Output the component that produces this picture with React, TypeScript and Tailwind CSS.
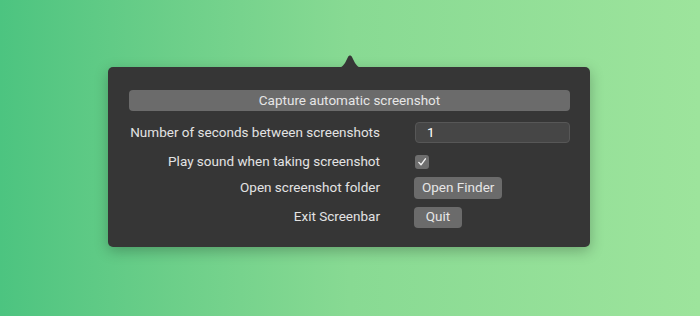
import React from "react";

function Row({ label, children }: { label: string; children: React.ReactNode }) {
  return (
    <div className="flex items-center">
      <div className="w-[251px] flex justify-end whitespace-nowrap text-[13.5px] text-[#e3e3e3] leading-none">
        {label}
      </div>
      <div className="ml-[35px] flex items-center">{children}</div>
    </div>
  );
}

export default function App() {
  return (
    <div
      className="w-[700px] h-[316px] overflow-hidden bg-gradient-to-r from-[#4cc480] via-[#88da93] to-[#9de49c] pt-[55px] pl-[108px]"
      style={{ fontFamily: "Roboto, 'Noto Sans', sans-serif" }}
    >
      <div className="relative w-[482px] mt-[12px]">
        <svg
          className="absolute left-[228px] -top-[12px]"
          width="28"
          height="13"
          viewBox="0 0 28 13"
        >
          <path d="M0 13 C5 13 7 11 9 8 L12 2 C13 0 15 0 16 2 L19 8 C21 11 23 13 28 13 Z" fill="#363636" />
        </svg>
        <div className="rounded-[5px] bg-[#363636] shadow-[0_4px_14px_rgba(0,0,0,0.25)] px-[21px] pt-[21px] pb-[19px]">
          <button className="w-[441px] h-[21px] rounded-[4px] bg-[#6b6b6b] text-[13.5px] text-[#e6e6e6] leading-none">
            Capture automatic screenshot
          </button>
          <div className="mt-[10px] flex flex-col">
            <div className="h-[21px] flex">
              <Row label="Number of seconds between screenshots">
                <div className="w-[155px] h-[21px] rounded-[4px] bg-[#464646] border border-[#575757] flex items-center pl-[11px] text-[13.5px] text-white">
                  1
                </div>
              </Row>
            </div>
            <div className="mt-[8px] h-[21px] flex">
              <Row label="Play sound when taking screenshot">
                <div className="w-[14px] h-[14px] rounded-[3px] bg-[#6e6e6e] flex items-center justify-center">
                  <svg width="10" height="10" viewBox="0 0 10 10">
                    <path d="M1.8 5.4 L4 7.8 L8.4 1.8" fill="none" stroke="#f2f2f2" strokeWidth="1.4" strokeLinecap="round" strokeLinejoin="round" />
                  </svg>
                </div>
              </Row>
            </div>
            <div className="mt-[5px] h-[22px] flex">
              <Row label="Open screenshot folder">
                <button className="h-[22px] px-[8px] rounded-[4px] bg-[#6b6b6b] text-[13.5px] text-[#e6e6e6] leading-none -ml-px">
                  Open Finder
                </button>
              </Row>
            </div>
            <div className="mt-[7px] h-[22px] flex">
              <Row label="Exit Screenbar">
                <button className="h-[21px] w-[48px] rounded-[4px] bg-[#6b6b6b] text-[13.5px] text-[#e6e6e6] leading-none -ml-px">
                  Quit
                </button>
              </Row>
            </div>
          </div>
        </div>
      </div>
    </div>
  );
}
